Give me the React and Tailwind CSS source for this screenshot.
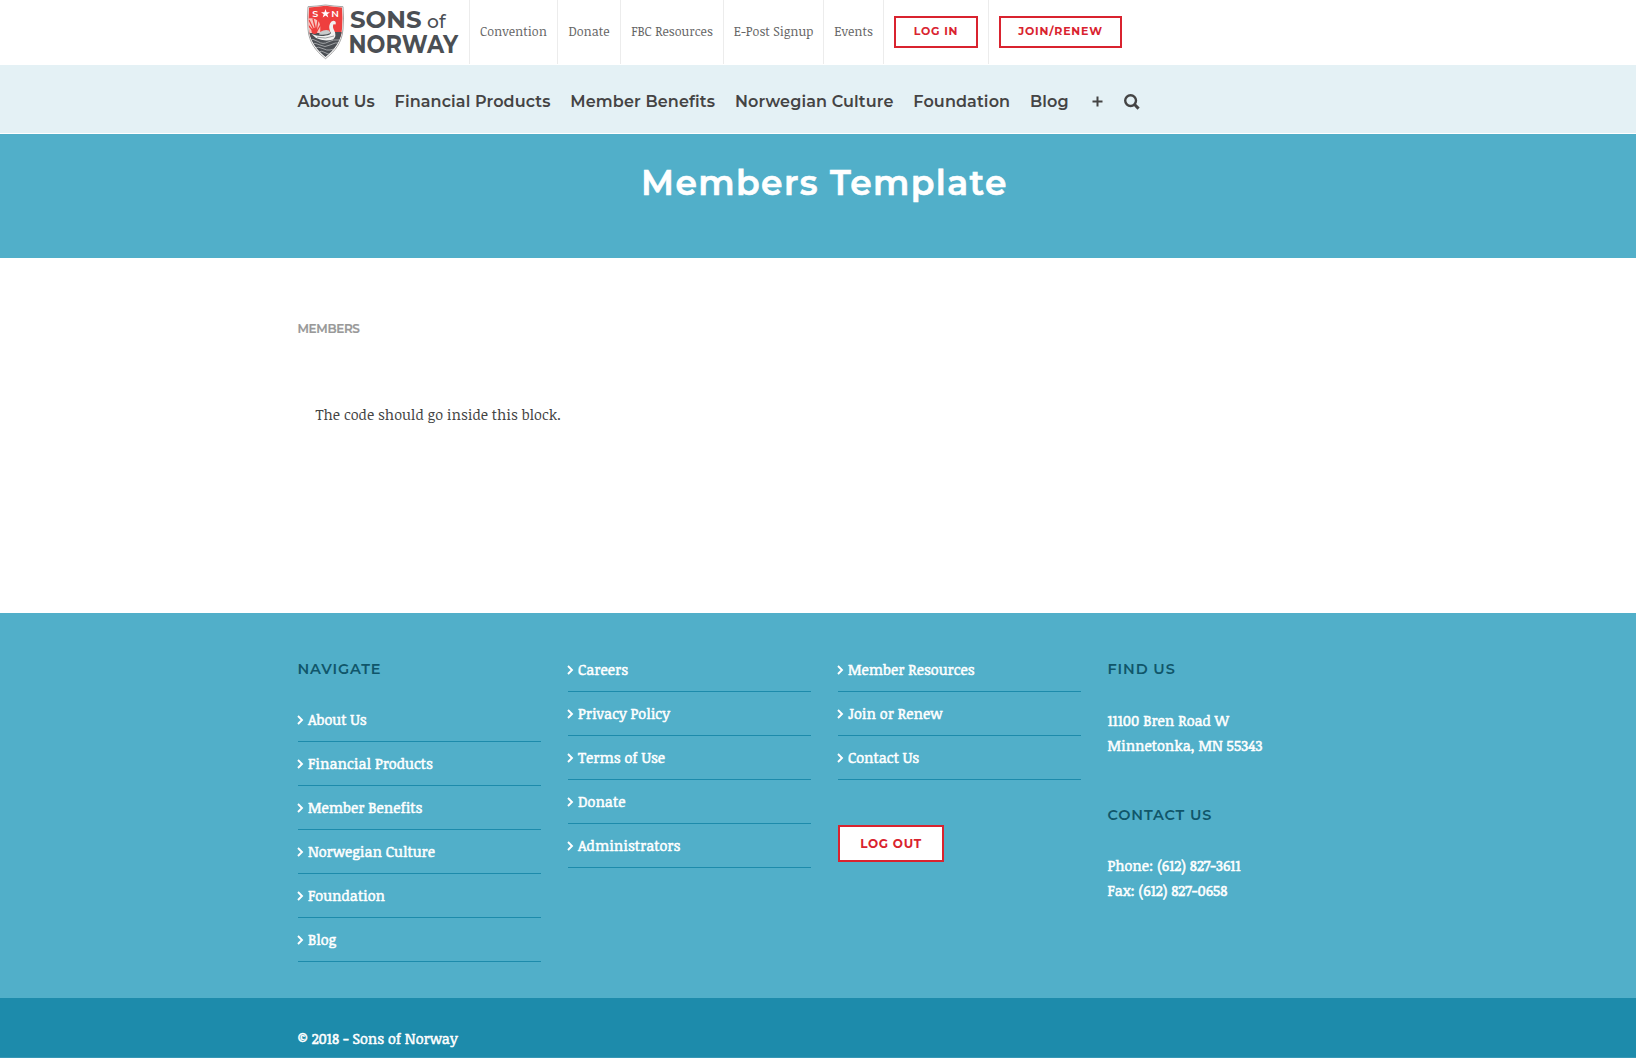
import React from 'react';

const topLinks = [
  ['Convention', 'w-[88px]'],
  ['Donate', 'w-[63px]'],
  ['FBC Resources', 'w-[103px]'],
  ['E-Post Signup', 'w-[100px]'],
  ['Events', 'w-[60px]'],
];

const mainLinks = ['About Us', 'Financial Products', 'Member Benefits', 'Norwegian Culture', 'Foundation', 'Blog'];

const companyLinks = ['Careers', 'Privacy Policy', 'Terms of Use', 'Donate', 'Administrators'];
const memberLinks = ['Member Resources', 'Join or Renew', 'Contact Us'];

function Shield() {
  return (
    <svg width="37" height="56" viewBox="0 0 37 56" className="shrink-0">
      <defs>
        <clipPath id="shield">
          <path d="M2 3.500Q10 3 18.500 1.800Q27 3 35 3.500Q36 14 35 25C34 38 27 46 18.500 53C10 46 3 38 2 25Q1 14 2 3.500Z" />
        </clipPath>
      </defs>
      <path d="M1 2.700Q10 2.200 18.500 1Q27 2.200 36 2.700Q37 14 36 25C35 39 28 47 18.500 54.700C9 47 2 39 1 25Q0 14 1 2.700Z" fill="#fff" stroke="#8d8d8d" strokeWidth=".8" />
      <g clipPath="url(#shield)">
        <rect width="37" height="33" fill="#ee3f3e" />
        <path d="M0 28H37V56H0Z" fill="#4b4f54" />
        <path d="M1 14.500Q8 13 12 18Q14 22 13 29H1Z" fill="#f9c3be" />
        <path d="M2 16L7 26M6 14.500L8.500 25M11 16L9.500 25M14 20L10 27M1 21L6 27" stroke="#ee3f3e" strokeWidth="1.300" />
        <circle cx="7.500" cy="27" r="3" fill="#ee3f3e" />
        <path d="M24 29Q21 24 23 19.500Q24.500 16.300 27.500 17Q29.500 18 28.500 20.500L26.500 20.300Q25 23 27.500 27Q30 32 26 35.500Q17 38 9 34L4.500 30Q12 33 19 31.500Q23 31 24 29Z" fill="#f1f1f1" />
        <path d="M13 28Q18 25 22 26.500L23.500 29Q19 31.500 12 30.500Z" fill="#c9cbcc" />
        <path d="M10 33.200Q18 35.500 27 32" fill="none" stroke="#777b7f" strokeWidth=".7" />
        <path d="M1 36Q6 34 11 37.500T21 38T34 36M3 40Q8 38 13 41T23 41T34 39M6 44Q12 42 17 45T31 43M10 48Q15 46 19 49T28 47" fill="none" stroke="#a9acae" strokeWidth=".9" />
      </g>
      <path d="M18.500 5L19.600 8.200H23L20.300 10.200L21.300 13.400L18.500 11.500L15.700 13.400L16.700 10.200L14 8.200H17.400Z" fill="#fff" />
      <text x="5.300" y="13" fill="#fff" fontFamily="Montserrat, Inter, sans-serif" fontSize="9.500" fontWeight="600">S</text>
      <text x="24.300" y="13" fill="#fff" fontFamily="Montserrat, Inter, sans-serif" fontSize="9.500" fontWeight="600">N</text>
    </svg>
  );
}

function Logo() {
  return (
    <div className="flex h-16 w-[172px] shrink-0 border-r border-[#ececec] pl-[9px] pt-1">
      <Shield />
      <svg width="112" height="56" viewBox="0 0 112 56" className="ml-[4px] shrink-0" fill="#4b4f54" fontFamily="Montserrat, Inter, sans-serif">
        <text x="2" y="24" fontSize="23.500" fontWeight="700" textLength="71.500" lengthAdjust="spacingAndGlyphs">SONS</text>
        <text x="79" y="24" fontSize="19" fontWeight="500" textLength="18.500" lengthAdjust="spacingAndGlyphs">of</text>
        <text x="0.500" y="49.300" fontSize="24.800" fontWeight="700" textLength="109.500" lengthAdjust="spacingAndGlyphs">NORWAY</text>
      </svg>
    </div>
  );
}

function FooterList({ items }) {
  return (
    <ul>
      {items.map((label) => (
        <li key={label} className="flex h-11 items-center border-b border-[#1d8bab] pt-px">
          <svg width="7" height="10" viewBox="0 0 7 10" className="-ml-[1px] mr-1 shrink-0" fill="none" stroke="#fff" strokeWidth="1.900">
            <path d="M1 1L5 5L1 9" />
          </svg>
          <a>{label}</a>
        </li>
      ))}
    </ul>
  );
}

function FooterHeading({ children }) {
  return (
    <h4 className="-ml-[0.5px] font-[Montserrat,Inter,sans-serif] text-[14.5px] font-semibold leading-5 tracking-[0.85px] text-[#10566a] [-webkit-text-stroke:0]">
      {children}
    </h4>
  );
}

export default function App() {
  return (
    <div className="h-[1058px] overflow-hidden bg-white font-['Noticia_Text','DejaVu_Serif_Condensed',serif] text-[#444]">
      <header>
        <div className="flex h-[65px] pl-[298px]">
          <Logo />
          <nav className="flex h-16 text-[12.5px] text-[#666]">
            {topLinks.map(([label, width]) => (
              <a key={label} className={`${width} flex items-center justify-center whitespace-nowrap border-r border-[#ececec]`}>
                {label}
              </a>
            ))}
            <div className="flex w-[105px] items-center border-r border-[#ececec] pl-[10px]">
              <button className="h-8 w-[84px] border-2 border-[#d9232f] pb-px font-[Montserrat,Inter,sans-serif] text-[11px] font-bold tracking-[0.75px] text-[#d9232f]">LOG IN</button>
            </div>
            <div className="flex items-center pl-[10px]">
              <button className="h-8 w-[123px] border-2 border-[#d9232f] pb-px font-[Montserrat,Inter,sans-serif] text-[11px] font-bold tracking-[0.8px] text-[#d9232f]">JOIN/RENEW</button>
            </div>
          </nav>
        </div>
        <nav className="flex h-[69px] items-center gap-[19.8px] whitespace-nowrap border-b border-white bg-[#e4f1f5] pl-[297.5px] pt-[5px] font-[Montserrat,Inter,sans-serif] text-base font-semibold tracking-[0.13px] text-[#444] [font-variant-ligatures:none]">
          {mainLinks.map((label) => (
            <a key={label}>{label}</a>
          ))}
          <span className="ml-[3px] flex items-center">
            <svg width="11" height="11" viewBox="0 0 11 11" stroke="#444" strokeWidth="2">
              <path d="M5.500 .5V10.500M.5 5.500H10.500" />
            </svg>
          </span>
          <svg width="16" height="16" viewBox="0 0 16 16" className="ml-[2px]" fill="none" stroke="#444">
            <circle cx="6.600" cy="6.600" r="5.400" strokeWidth="2.400" />
            <path d="M10.300 10.300L14.600 14.600" strokeWidth="3" />
          </svg>
        </nav>
      </header>

      <section className="flex h-[124px] justify-center bg-[#51afc9] pl-[13px] pt-[24px]">
        <h1 className="font-[Montserrat,Inter,sans-serif] text-[34.5px] font-semibold leading-[50px] tracking-[1.4px] text-white [-webkit-text-stroke:0.6px_white]">Members Template</h1>
      </section>

      <main className="h-[355px] pl-[297.5px] pt-[61px]">
        <h5 className="font-[Montserrat,Inter,sans-serif] text-xs font-semibold leading-5 tracking-[-0.35px] text-[#999] [-webkit-text-stroke:0.2px_#999]">MEMBERS</h5>
        <p className="ml-[18px] mt-[64px] text-[14.4px] leading-6">The code should go inside this block.</p>
      </main>

      <footer className="text-[14.4px] text-white [-webkit-text-stroke:0.5px_white]">
        <div className="grid h-[385px] grid-cols-[243px_243px_243px_243px] gap-x-[27px] bg-[#51afc9] pl-[298px] pt-[35px]">
          <div className="pt-[11px]">
            <FooterHeading>NAVIGATE</FooterHeading>
            <div className="mt-[19px]">
              <FooterList items={mainLinks} />
            </div>
          </div>
          <FooterList items={companyLinks} />
          <div>
            <FooterList items={memberLinks} />
            <button className="mt-[45px] h-[37px] w-[106px] border-2 border-[#d9232f] bg-white font-[Montserrat,Inter,sans-serif] text-xs font-bold tracking-[0.7px] text-[#d9232f] [-webkit-text-stroke:0]">LOG OUT</button>
          </div>
          <div className="pt-[11px] leading-[25px]">
            <FooterHeading>FIND US</FooterHeading>
            <p className="-ml-[0.5px] mt-[29px]">
              11100 Bren Road W
              <br />
              Minnetonka, MN 55343
            </p>
            <div className="mt-[47px]">
              <FooterHeading>CONTACT US</FooterHeading>
            </div>
            <p className="-ml-[0.5px] mt-[28px]">
              Phone: (612) 827-3611
              <br />
              Fax: (612) 827-0658
            </p>
          </div>
        </div>
        <div className="h-[60px] border-b border-[#3797b5] bg-[#1d8bab] pl-[297.5px] pt-[28px] leading-[25px]">© 2018 - Sons of Norway</div>
      </footer>
    </div>
  );
}
